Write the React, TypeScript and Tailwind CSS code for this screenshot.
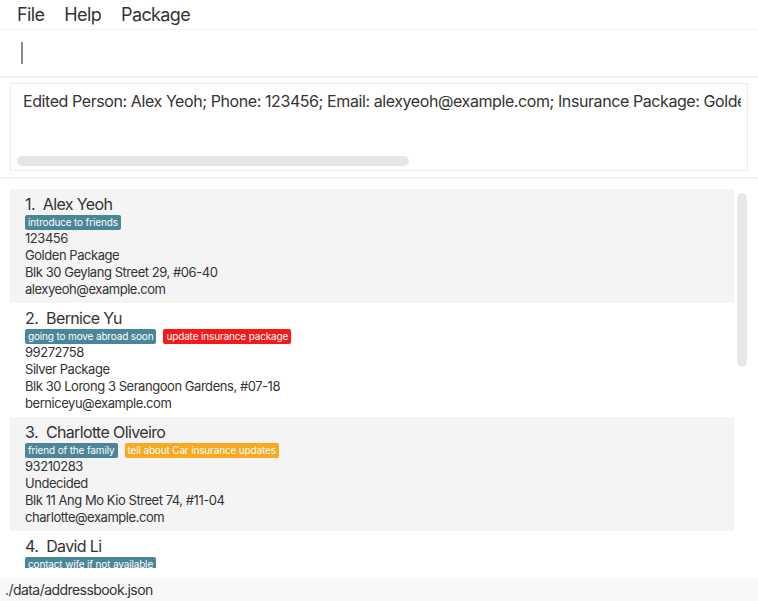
import React from 'react';

type Tag = { label: string; tone: 'blue' | 'red' | 'orange' };

interface Person {
  name: string;
  tags: Tag[];
  phone: string;
  pkg: string;
  address: string;
  email: string;
}

const people: Person[] = [
  {
    name: 'Alex Yeoh',
    tags: [{ label: 'introduce to friends', tone: 'blue' }],
    phone: '123456',
    pkg: 'Golden Package',
    address: 'Blk 30 Geylang Street 29, #06-40',
    email: 'alexyeoh@example.com',
  },
  {
    name: 'Bernice Yu',
    tags: [
      { label: 'going to move abroad soon', tone: 'blue' },
      { label: 'update insurance package', tone: 'red' },
    ],
    phone: '99272758',
    pkg: 'Silver Package',
    address: 'Blk 30 Lorong 3 Serangoon Gardens, #07-18',
    email: 'berniceyu@example.com',
  },
  {
    name: 'Charlotte Oliveiro',
    tags: [
      { label: 'friend of the family', tone: 'blue' },
      { label: 'tell about Car insurance updates', tone: 'orange' },
    ],
    phone: '93210283',
    pkg: 'Undecided',
    address: 'Blk 11 Ang Mo Kio Street 74, #11-04',
    email: 'charlotte@example.com',
  },
  {
    name: 'David Li',
    tags: [{ label: 'contact wife if not available', tone: 'blue' }],
    phone: '91031282',
    pkg: 'Bronze Package',
    address: 'Blk 436 Serangoon Gardens Street 26, #16-43',
    email: 'lidavid@example.com',
  },
];

const toneClass = {
  blue: 'bg-[#4b8598]',
  red: 'bg-[#f51a1a]',
  orange: 'bg-[#f8a920]',
};

const PersonCard: React.FC<{ person: Person; index: number }> = ({ person, index }) => (
  <div className={`px-[15px] py-[5px] ${index % 2 === 0 ? 'bg-[#f4f4f4]' : 'bg-white'}`}>
    <div className="h-[20px] text-[16px] leading-[20px] tracking-[-0.04em] text-[#333]">
      {index + 1}.<span className="ml-[8px]">{person.name}</span>
    </div>
    <div className="mt-[1px] flex gap-[7px]">
      {person.tags.map((t) => (
        <span
          key={t.label}
          className={`h-[15px] rounded-[2px] px-[3px] text-[10px] leading-[15px] tracking-[-0.015em] text-white ${toneClass[t.tone]}`}
        >
          {t.label}
        </span>
      ))}
    </div>
    <div className="text-[13px] leading-[17px] tracking-[-0.035em] text-[#333]">
      <div>{person.phone}</div>
      <div>{person.pkg}</div>
      <div>{person.address}</div>
      <div>{person.email}</div>
    </div>
  </div>
);

export default function App() {
  return (
    <div
      className="flex h-[601px] w-[758px] flex-col overflow-hidden bg-white text-[#333]"
      style={{ fontFamily: 'Inter, "Noto Sans", sans-serif' }}
    >
      {/* menu bar */}
      <div className="flex h-[29px] shrink-0 items-center gap-[20px] pl-[17px] text-[18px] tracking-[-0.035em] text-[#333]">
        <span>File</span>
        <span>Help</span>
        <span>Package</span>
      </div>
      <div className="h-px shrink-0 bg-[#f0f0f0]" />

      {/* command box */}
      <div className="flex h-[46px] shrink-0 items-center pl-[21px]">
        <div className="h-[22px] w-[2px] bg-[#8a8a8a]" />
      </div>
      <div className="h-[2px] shrink-0 bg-[#f2f2f2]" />

      {/* result display */}
      <div className="shrink-0 px-[10px] pt-[5px] pb-[6px]">
        <div className="flex h-[88px] flex-col border border-[#ececec] px-[6px]">
          <div className="overflow-hidden whitespace-nowrap pl-[6px] pt-[7px] text-[16px] leading-[20px] tracking-[-0.026em] text-[#333]">
            Edited Person: Alex Yeoh; Phone: 123456; Email: alexyeoh@example.com; Insurance Package: Golden Package
          </div>
          <div className="mt-auto mb-[4px] h-[10px] w-[392px] rounded-full bg-[#e6e6e6]" />
        </div>
      </div>
      <div className="h-[2px] shrink-0 bg-[#f2f2f2]" />

      {/* person list */}
      <div className="flex min-h-0 flex-1 py-[10px] pl-[10px]">
        <div className="flex min-h-0 flex-1 overflow-hidden">
          <div className="w-[724px] shrink-0">
            {people.map((p, i) => (
              <PersonCard key={p.name} person={p} index={i} />
            ))}
          </div>
          <div className="ml-[3px] mt-[4px] h-[174px] w-[10px] rounded-full bg-[#e8e8e8]" />
        </div>
      </div>

      {/* status bar */}
      <div className="flex h-[23px] shrink-0 items-center bg-[#f7f7f7] pl-[5px] text-[14px] tracking-[-0.04em] text-[#333]">
        ./data/addressbook.json
      </div>
    </div>
  );
}
